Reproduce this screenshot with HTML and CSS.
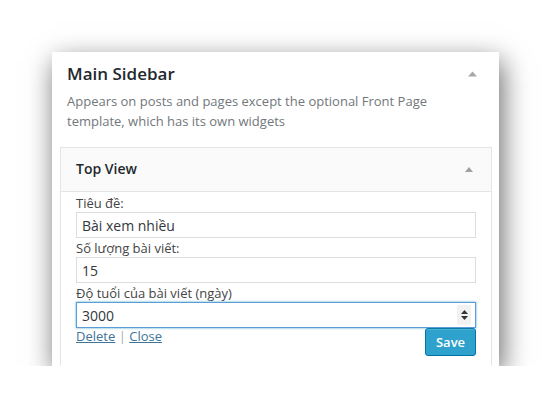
FILE: index.html
```html
<!DOCTYPE html>
<html lang="vi">
<head>
<meta charset="utf-8">
<title>Main Sidebar</title>
<link rel="stylesheet" href="styles.css">
</head>
<body>
<div class="card">
  <div class="section-head">
    <h2 class="section-title">Main Sidebar</h2>
    <svg class="arrow arrow-title" width="9" height="6" viewBox="0 0 9 6"><path d="M0 5.5 L4.5 0.5 L9 5.5 Z" fill="#a8a8a8"/></svg>
  </div>
  <p class="section-desc">Appears on posts and pages except the optional Front Page template, which has its own widgets</p>
  <div class="widget">
    <div class="widget-top">
      <h3 class="widget-title">Top View</h3>
      <svg class="arrow" width="8" height="5" viewBox="0 0 8 5"><path d="M0 5 L4 0 L8 5 Z" fill="#a0a0a0"/></svg>
    </div>
    <div class="widget-inside">
      <label class="field-label">Tiêu đề:</label>
      <input class="field" type="text" value="Bài xem nhiều">
      <label class="field-label">Số lượng bài viết:</label>
      <input class="field" type="text" value="15">
      <label class="field-label">Độ tuổi của bài viết (ngày)</label>
      <div class="field-wrap">
        <input class="field field-focus" type="text" value="3000">
        <span class="spinner"><svg width="9" height="14" viewBox="0 0 9 14"><path d="M1 6 L4.5 2 L8 6 Z M1 8 L4.5 12 L8 8 Z" fill="#333"/></svg></span>
      </div>
      <div class="actions">
        <div class="links"><a href="#">Delete</a> <span class="sep">|</span> <a href="#">Close</a></div>
        <button class="save" type="button">Save</button>
      </div>
    </div>
  </div>
</div>
</body>
</html>
```
FILE: styles.css
```css
* { box-sizing: border-box; }
html, body { margin: 0; padding: 0; background: #fff; }
body {
  font-family: "Open Sans", "Liberation Sans", sans-serif;
  color: #23282d;
  padding: 52px 0 0 52px;
}
.card {
  width: 447px;
  height: 314px;
  background: #fff;
  overflow: hidden;
  box-shadow: 3px 9px 26px rgba(0,0,0,0.6);
  padding-top: 10px;
}
.section-head {
  display: flex;
  align-items: flex-start;
  justify-content: space-between;
  padding: 0 22px 0 15px;
}
.section-title {
  margin: 0;
  font-size: 17px;
  font-weight: 600;
  line-height: 24px;
  color: #23282d;
}
.arrow-title { margin-top: 9px; }
.section-desc {
  margin: 6px 0 0 0;
  padding: 0 15px;
  font-size: 13px;
  line-height: 19.5px;
  color: #72777c;
}
.widget {
  margin: 16px 0 0 8px;
  width: 432px;
  border: 1px solid #e5e5e5;
  background: #fff;
}
.widget-top {
  display: flex;
  justify-content: space-between;
  align-items: center;
  background: #fafafa;
  border-bottom: 1px solid #e5e5e5;
  padding: 11px 18px 12px 15px;
}
.widget-title {
  margin: 0;
  font-size: 14px;
  font-weight: 600;
  line-height: 20px;
  color: #23282d;
}
.widget-inside {
  padding: 3px 15px 15px 15px;
}
.field-label {
  display: block;
  font-size: 13px;
  line-height: 17px;
  color: #444;
}
.field {
  display: block;
  width: 100%;
  height: 26px;
  margin: 0 0 2px 0;
  padding: 0 5px;
  border: 1px solid #ddd;
  font-family: inherit;
  font-size: 14px;
  color: #32373c;
  background: #fff;
  outline: none;
}
.field-wrap { position: relative; }
.field-focus {
  border-color: #5b9dd9;
  box-shadow: 0 0 2px rgba(30,140,190,0.8);
  margin-bottom: 0;
}
.spinner {
  position: absolute;
  right: 5px;
  top: 3px;
  width: 14px;
  height: 20px;
  background: #f1f1f1;
  display: flex;
  align-items: center;
  justify-content: center;
}
.spinner svg { display: block; }
.actions {
  display: flex;
  justify-content: space-between;
  align-items: flex-start;
}
.links {
  font-size: 13px;
  line-height: 17px;
}
.links a { color: #3d7497; text-decoration: underline; }
.sep { color: #aaa; }
.save {
  width: 51px;
  height: 28px;
  padding: 0;
  background: #2ea2cc;
  border: 1px solid #0074a2;
  border-radius: 3px;
  box-shadow: inset 0 1px 0 rgba(120,200,230,0.5);
  color: #fff;
  font-family: inherit;
  font-size: 13px;
  font-weight: 600;
  line-height: 26px;
}
```
